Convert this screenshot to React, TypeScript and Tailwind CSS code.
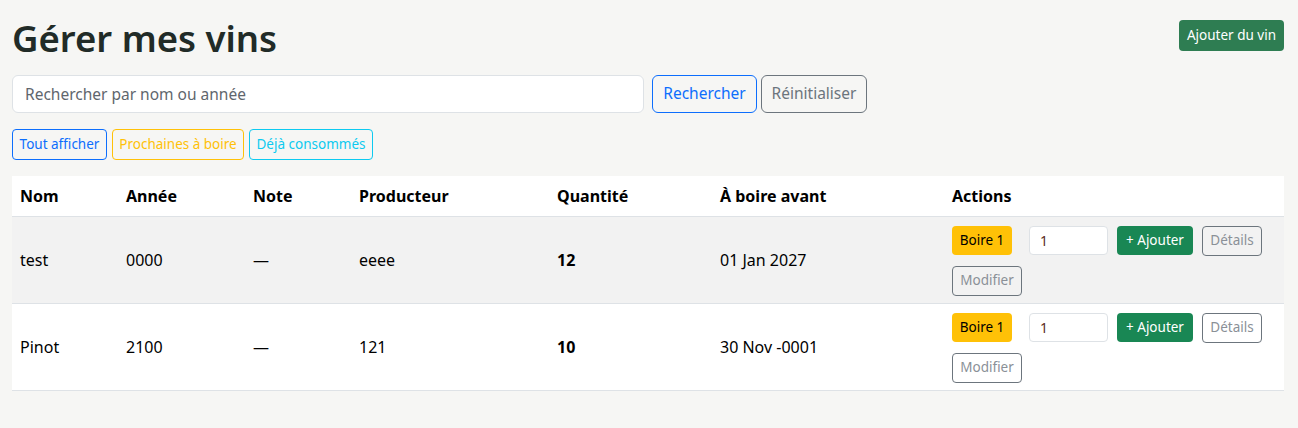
import { useState } from 'react';

type Wine = {
  nom: string;
  annee: string;
  note: string;
  producteur: string;
  quantite: number;
  avant: string;
  striped: boolean;
};

const wines: Wine[] = [
  { nom: 'test', annee: '0000', note: '—', producteur: 'eeee', quantite: 12, avant: '01 Jan 2027', striped: true },
  { nom: 'Pinot', annee: '2100', note: '—', producteur: '121', quantite: 10, avant: '30 Nov -0001', striped: false },
];

function WineRow({ wine }: { wine: Wine }) {
  const [qty, setQty] = useState('1');
  return (
    <tr className={`border-b border-[#dee2e6] ${wine.striped ? 'bg-[#f2f2f2]' : 'bg-white'}`}>
      <td className="px-2 align-middle">{wine.nom}</td>
      <td className="px-2 align-middle">{wine.annee}</td>
      <td className="px-2 align-middle">{wine.note}</td>
      <td className="px-2 align-middle">{wine.producteur}</td>
      <td className="px-2 align-middle font-bold">{wine.quantite}</td>
      <td className="px-2 align-middle">{wine.avant}</td>
      <td className="px-2 pt-[9px] pb-[7px] align-middle">
        <div className="flex flex-wrap gap-y-[10px] items-center">
          <button className="h-[29px] w-[60px] rounded-[4px] bg-[#ffc107] text-[13.5px] text-black mr-[17px]">
            Boire 1
          </button>
          <input
            value={qty}
            onChange={(e) => setQty(e.target.value)}
            className="h-[29px] w-[79px] rounded-[4px] border border-[#dee2e6] bg-white px-[10px] text-[14px] text-[#5c2b1c] outline-none mr-[9px]"
          />
          <button className="h-[29px] w-[76px] rounded-[4px] bg-[#198754] text-[13.5px] text-white mr-[9px]">
            + Ajouter
          </button>
          <button className="h-[30px] w-[60px] rounded-[4px] border border-[#6c757d] text-[13.5px] text-[#8a9097]">
            Détails
          </button>
          <button className="h-[30px] w-[70px] rounded-[4px] border border-[#6c757d] text-[13.5px] text-[#8a9097]">
            Modifier
          </button>
        </div>
      </td>
    </tr>
  );
}

export default function App() {
  const [search, setSearch] = useState('');

  return (
    <div className="min-h-screen bg-[#f6f6f4] pl-3 pr-[14px] pt-[14px] text-[16px] text-[#212529] font-['Noto_Sans','Open_Sans',sans-serif]">
      {/* Header */}
      <div className="flex items-start justify-between">
        <h1 className="text-[36.5px] leading-[48px] font-semibold text-[#212b27]">Gérer mes vins</h1>
        <button className="mt-[6px] h-[31px] w-[105px] rounded-[4px] bg-[#2e7d52] text-[13.5px] text-white">
          Ajouter du vin
        </button>
      </div>

      {/* Search */}
      <div className="mt-[13px] flex items-center">
        <input
          value={search}
          onChange={(e) => setSearch(e.target.value)}
          placeholder="Rechercher par nom ou année"
          className="h-[38px] w-[632px] rounded-[6px] border border-[#dee2e6] bg-white px-3 text-[15.5px] placeholder:text-[#5f666d] outline-none"
        />
        <button className="ml-[8px] h-[38px] w-[105px] rounded-[6px] border border-[#0d6efd] text-[15.5px] text-[#0d6efd]">
          Rechercher
        </button>
        <button className="ml-[4px] h-[38px] w-[106px] rounded-[6px] border border-[#6c757d] text-[15.5px] text-[#6c757d]">
          Réinitialiser
        </button>
      </div>

      {/* Filters */}
      <div className="mt-[16px] flex gap-[5px]">
        <button className="h-[31px] w-[95px] rounded-[4px] border border-[#0d6efd] text-[13.5px] text-[#0d6efd]">
          Tout afficher
        </button>
        <button className="h-[31px] w-[132px] rounded-[4px] border border-[#ffc107] text-[13.5px] text-[#ffc107]">
          Prochaines à boire
        </button>
        <button className="h-[31px] w-[124px] rounded-[4px] border border-[#0dcaf0] text-[13.5px] text-[#0dcaf0]">
          Déjà consommés
        </button>
      </div>

      {/* Table */}
      <table className="mt-[16px] w-[1272px] table-fixed border-collapse text-left text-black">
        <colgroup>
          <col className="w-[106px]" />
          <col className="w-[127px]" />
          <col className="w-[106px]" />
          <col className="w-[198px]" />
          <col className="w-[163px]" />
          <col className="w-[232px]" />
          <col className="w-[340px]" />
        </colgroup>
        <thead>
          <tr className="h-[40px] bg-white border-b border-[#dee2e6]">
            <th className="px-2 font-bold">Nom</th>
            <th className="px-2 font-bold">Année</th>
            <th className="px-2 font-bold">Note</th>
            <th className="px-2 font-bold">Producteur</th>
            <th className="px-2 font-bold">Quantité</th>
            <th className="px-2 font-bold">À boire avant</th>
            <th className="px-2 font-bold">Actions</th>
          </tr>
        </thead>
        <tbody>
          {wines.map((w) => (
            <WineRow key={w.nom} wine={w} />
          ))}
        </tbody>
      </table>
    </div>
  );
}
